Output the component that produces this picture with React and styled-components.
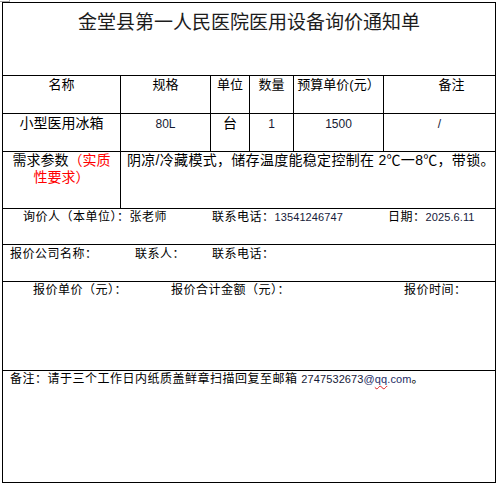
import React from "react";
import styled, { createGlobalStyle } from "styled-components";

const GlobalStyle = createGlobalStyle`
  html, body { margin: 0; padding: 0; background: #fff; }
  body { font-family: "Liberation Sans", "Noto Sans CJK SC", sans-serif; color: #000; }
`;

const FONT = `"Liberation Sans", "Noto Sans CJK SC", sans-serif`;

const Page = styled.div`
  position: relative;
  padding: 2px;
  width: 494px;
  &::before {
    content: "";
    position: absolute;
    top: 0;
    left: 0;
    width: 9px;
    height: 1px;
    border-bottom: 1px solid #a8a8a8;
    border-right: 1px solid #a8a8a8;
  }
`;

const Sheet = styled.div`
  display: grid;
  grid-template-columns: 117px 89px 38px 43px 89px 111px;
  grid-template-rows: 72px 37px 37px 56px 35px 36px 88px 111px;
  gap: 1px;
  padding: 1px;
  background: #000;
  font-family: ${FONT};
`;

const Cell = styled.div`
  background: #fff;
  box-sizing: border-box;
  min-width: 0;
`;

const TitleCell = styled(Cell)`
  grid-column: 1 / -1;
  text-align: center;
  font-family: "Noto Sans CJK SC", sans-serif;
  font-size: 19px;
  line-height: 24px;
  padding-top: 6px;
  color: #1c1c1c;
`;

const HeadCell = styled(Cell)`
  text-align: center;
  font-size: 13px;
  line-height: 16px;
  padding: 1px 0 0 ${(p) => p.$shift || 0}px;
`;

const DataCell = styled(Cell)`
  text-align: center;
  font-size: ${(p) => (p.$latin ? 12 : 14)}px;
  line-height: 18px;
  padding-top: ${(p) => (p.$latin ? 1 : 0)}px;
  color: ${(p) => (p.$latin ? "#161a33" : "#000")};
`;

const LabelCell = styled(Cell)`
  text-align: center;
  font-size: 14px;
  line-height: 17px;
  padding: 0 7px;
`;

const DescCell = styled(Cell)`
  grid-column: 2 / -1;
  font-size: 14px;
  line-height: 17px;
  padding: 0 0 0 6px;
  white-space: nowrap;
  letter-spacing: 0.3px;
`;

const Red = styled.span`
  color: #ff0000;
`;

const InfoRow = styled(Cell)`
  grid-column: 1 / -1;
  display: flex;
  align-items: flex-start;
  font-size: 12px;
  line-height: 16px;
  letter-spacing: 0.5px;
  padding: ${(p) => p.$top || 0}px 0 0 ${(p) => p.$indent || 0}px;
  white-space: nowrap;
`;

const Field = styled.span`
  flex: ${(p) => (p.$w ? `0 0 ${p.$w}px` : "1 1 auto")};
`;

const Num = styled.span`
  font-family: "Liberation Sans", sans-serif;
  font-size: 11px;
  letter-spacing: 0.1px;
  color: #161a3a;
`;

const Mail = styled.span`
  font-family: "Liberation Sans", sans-serif;
  font-size: 11px;
  letter-spacing: 0.1px;
  color: #1e2c66;
`;

const Wavy = styled.span`
  text-decoration: underline wavy #e02020;
  text-decoration-thickness: 1px;
  text-underline-offset: 2px;
`;

const headers = [
  { t: "名称" },
  { t: "规格" },
  { t: "单位" },
  { t: "数量" },
  { t: "预算单价(元）" },
  { t: "备注", shift: 24 },
];

const values = [
  { t: "小型医用冰箱" },
  { t: "80L", latin: true },
  { t: "台" },
  { t: "1", latin: true },
  { t: "1500", latin: true },
  { t: "/", latin: true },
];

export default function App() {
  return (
    <>
      <GlobalStyle />
      <Page>
        <Sheet>
          <TitleCell>金堂县第一人民医院医用设备询价通知单</TitleCell>

          {headers.map((h) => (
            <HeadCell key={h.t} $shift={h.shift}>
              {h.t}
            </HeadCell>
          ))}

          {values.map((v, i) => (
            <DataCell key={i} $latin={v.latin}>
              {v.t}
            </DataCell>
          ))}

          <LabelCell>
            需求参数<Red>（实质性要求）</Red>
          </LabelCell>
          <DescCell>阴凉/冷藏模式，储存温度能稳定控制在 2℃一8℃，带锁。</DescCell>

          <InfoRow $indent={20} $top={0}>
            <Field $w={189}>询价人（本单位）：张老师</Field>
            <Field $w={176}>
              联系电话：<Num>13541246747</Num>
            </Field>
            <Field>
              日期：<Num>2025.6.11</Num>
            </Field>
          </InfoRow>

          <InfoRow $indent={7} $top={1}>
            <Field $w={125}>报价公司名称：</Field>
            <Field $w={77}>联系人：</Field>
            <Field>联系电话：</Field>
          </InfoRow>

          <InfoRow $indent={30} $top={0}>
            <Field $w={138}>报价单价（元）：</Field>
            <Field $w={233}>报价合计金额（元）：</Field>
            <Field>报价时间：</Field>
          </InfoRow>

          <InfoRow $indent={7} $top={0}>
            <Field>
              备注：请于三个工作日内纸质盖鲜章扫描回复至邮箱 <Num>2747532673</Num>
              <Mail>
                @<Wavy>qq</Wavy>.com
              </Mail>
              。
            </Field>
          </InfoRow>
        </Sheet>
      </Page>
    </>
  );
}
